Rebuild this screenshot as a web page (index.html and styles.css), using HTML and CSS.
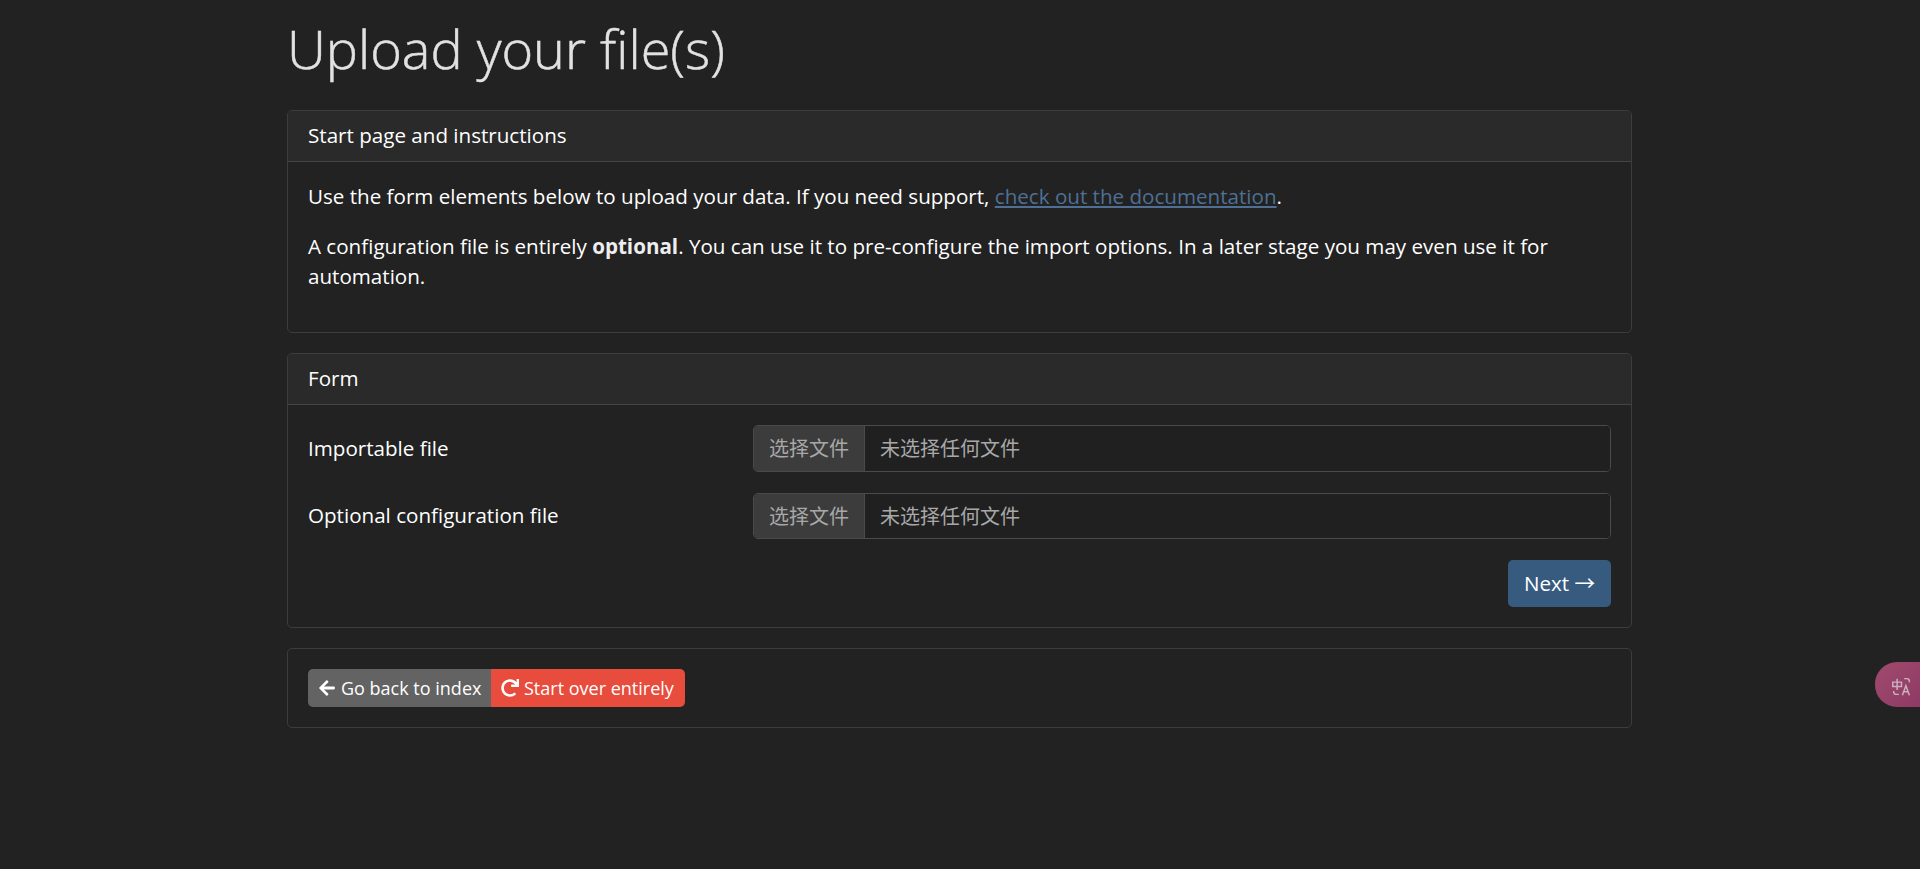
FILE: index.html
```html
<!DOCTYPE html>
<html lang="en">
<head>
    <meta charset="UTF-8">
    <meta name="viewport" content="width=device-width, initial-scale=1.0">
    <title>Upload your file(s)</title>
    <link rel="stylesheet" href="styles.css">
</head>
<body>
    <div class="container">
        <h1>Upload your file(s)</h1>

        <div class="card">
            <div class="card-header">Start page and instructions</div>
            <div class="card-body">
                <p>Use the form elements below to upload your data. If you need support, <a href="#">check out the documentation</a>.</p>
                <p>A configuration file is entirely <strong>optional</strong>. You can use it to pre-configure the import options. In a later stage you may even use it for automation.</p>
            </div>
        </div>

        <div class="card">
            <div class="card-header">Form</div>
            <div class="card-body">
                <div class="form-row">
                    <label>Importable file</label>
                    <div class="file-input">
                        <span class="file-btn">选择文件</span>
                        <span class="file-name">未选择任何文件</span>
                    </div>
                </div>
                <div class="form-row">
                    <label>Optional configuration file</label>
                    <div class="file-input">
                        <span class="file-btn">选择文件</span>
                        <span class="file-name">未选择任何文件</span>
                    </div>
                </div>
                <div class="form-actions">
                    <button class="btn-next">Next →</button>
                </div>
            </div>
        </div>

        <div class="card">
            <div class="card-body">
                <div class="btn-group">
                    <a class="btn btn-back" href="#">
                        <svg class="icon" viewBox="0 0 448 512"><path d="M257.5 445.1l-22.2 22.2c-9.4 9.4-24.6 9.4-33.9 0L7 273c-9.4-9.4-9.4-24.6 0-33.9L201.4 44.7c9.4-9.4 24.6-9.4 33.9 0l22.2 22.2c9.5 9.5 9.3 25-.4 34.3L136.6 216H424c13.3 0 24 10.7 24 24v32c0 13.3-10.7 24-24 24H136.6l120.5 114.8c9.8 9.3 10 24.8.4 34.3z"/></svg>
                        Go back to index
                    </a>
                    <a class="btn btn-over" href="#">
                        <svg class="icon" viewBox="0 0 512 512"><path d="M500.33 0h-47.41a12 12 0 0 0-12 12.57l4 82.76A247.42 247.42 0 0 0 256 8C119.34 8 7.9 119.53 8 256.19 8.1 393.07 119.1 504 256 504a247.1 247.1 0 0 0 166.18-63.91 12 12 0 0 0 .48-17.43l-34-34a12 12 0 0 0-16.38-.55A176 176 0 1 1 402.1 157.8l-101.53-4.87a12 12 0 0 0-12.57 12v47.41a12 12 0 0 0 12 12h200.33a12 12 0 0 0 12-12V12a12 12 0 0 0-12-12z"/></svg>
                        Start over entirely
                    </a>
                </div>
            </div>
        </div>
    </div>

    <div class="translate-tab">
        <svg viewBox="0 0 24 24" width="21" height="21" fill="none" stroke="#cdb0be" stroke-width="1.7">
            <path d="M2 7h10v5H2zM7 3v13"/>
            <path d="M15 3h3a3 3 0 0 1 3 3v1M9 21H6a3 3 0 0 1-3-3v-1"/>
            <path d="M13 22l4-11 4 11M14.500 18h5"/>
        </svg>
    </div>
</body>
</html>
```

FILE: styles.css
```css
* {
    box-sizing: border-box;
}
body {
    margin: 0;
    height: 869px;
    overflow: hidden;
    background-color: #222;
    color: #fff;
    font-family: "Open Sans", "Noto Sans CJK SC", sans-serif;
    font-size: 20.6px;
    line-height: 30px;
}
.container {
    width: 1345px;
    margin-left: 287px;
    padding-top: 15px;
}
h1 {
    margin: 0 0 20px;
    height: 75px;
    font-size: 54px;
    font-weight: 300;
    line-height: 66px;
    color: #e2e2e2;
    -webkit-text-stroke: 0.5px #e2e2e2;
}
.card {
    border: 1px solid #3d3d3d;
    border-radius: 5px;
    margin-bottom: 20px;
}
.card-header {
    height: 51px;
    padding: 9px 20px 0 20px;
    background-color: #2a2a2a;
    border-bottom: 1px solid #444;
    border-radius: 5px 5px 0 0;
}
.card-body {
    padding: 20px;
}
.card-body p {
    margin: -1px 0 21px;
}
a {
    color: #4f7094;
}
strong {
    color: #eee;
}
.form-row {
    display: grid;
    grid-template-columns: 445px 1fr;
    align-items: center;
    margin-bottom: 21px;
}
.form-row label {
    padding-bottom: 1px;
}
.file-input {
    display: flex;
    height: 46.5px;
    border: 1px solid #4a4a4a;
    border-radius: 5px;
    overflow: hidden;
    font-size: 20px;
    line-height: 45px;
    color: #a8a8a8;
}
.file-btn {
    width: 111px;
    text-align: center;
    background-color: #3c3c3c;
    border-right: 1px solid #4a4a4a;
}
.file-name {
    padding-left: 15px;
    background-color: #202020;
    flex: 1;
}
.form-actions {
    display: flex;
    justify-content: flex-end;
}
.btn-next {
    width: 103px;
    height: 47px;
    border: none;
    border-radius: 5px;
    background-color: #375a7f;
    color: #fff;
    font: inherit;
    padding: 0 0 2px;
}
.btn-group {
    display: flex;
}
.btn {
    display: flex;
    align-items: center;
    gap: 5px;
    height: 38px;
    padding: 0 10px;
    color: #fff;
    font-size: 18px;
    white-space: nowrap;
    text-decoration: none;
}
.btn-back {
    width: 183px;
    background-color: #636363;
    border-radius: 5px 0 0 5px;
}
.btn-over {
    width: 194px;
    background-color: #e74c3c;
    border-radius: 0 5px 5px 0;
}
.icon {
    width: 18px;
    height: 18px;
    fill: #fff;
    flex: none;
}
.translate-tab {
    position: fixed;
    top: 662px;
    right: 0;
    width: 45px;
    height: 45px;
    padding: 12px 0 0 16px;
    border-radius: 22px 0 0 22px;
    background: linear-gradient(135deg, #a04a6d, #8e3a64);
}
```
